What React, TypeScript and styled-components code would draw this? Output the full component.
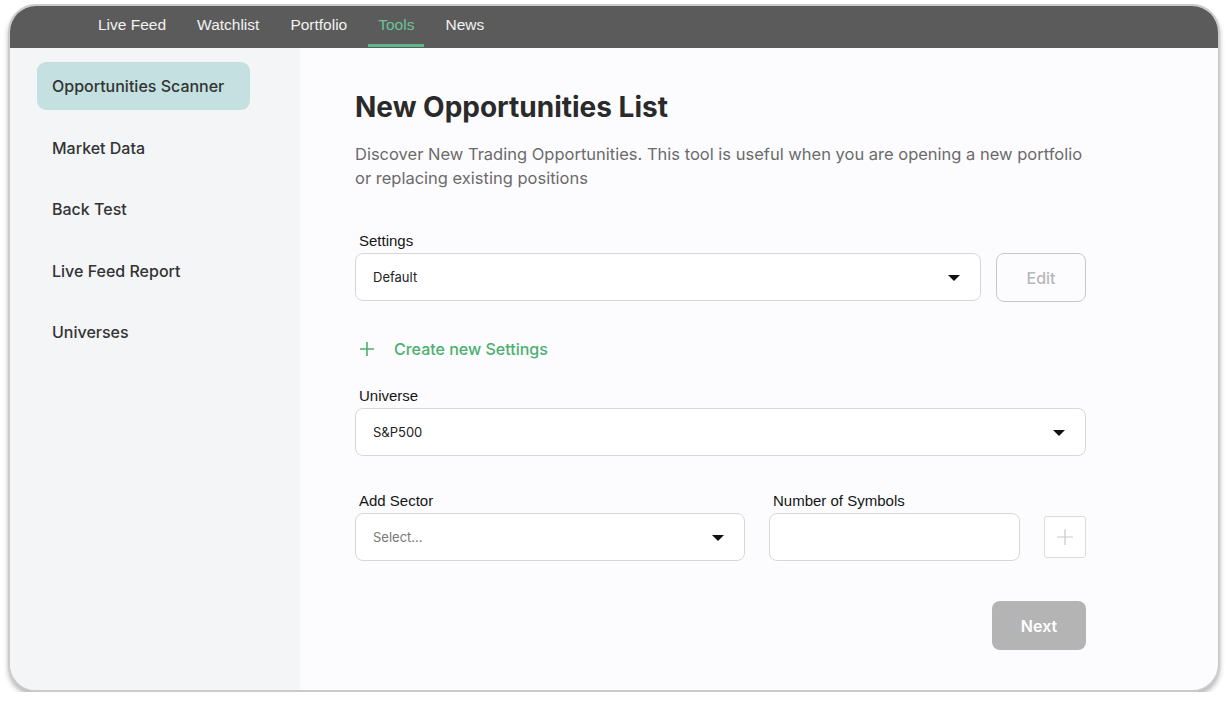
import React from 'react'
import styled, { createGlobalStyle } from 'styled-components'

const GlobalStyle = createGlobalStyle`
    * {
        box-sizing: border-box;
    }
    body {
        margin: 0;
        background: #ffffff;
        font-family: Inter, 'Noto Sans', sans-serif;
    }
`

const Window = styled.div`
    margin: 4px 0 0 8px;
    width: 1212px;
    height: 688px;
    border: 2px solid #cbcbcb;
    border-radius: 28px;
    box-shadow: 0 4px 5px rgba(0, 0, 0, 0.28);
    overflow: hidden;
    display: flex;
    flex-direction: column;
    background: #fcfcfe;
`

const TopBar = styled.nav`
    flex: 0 0 42px;
    background: #5b5b5b;
    display: flex;
    align-items: stretch;
    gap: 11px;
    padding-left: 78px;
`

const NavItem = styled.div<{ $active?: boolean }>`
    display: flex;
    align-items: center;
    padding: 0 10px;
    font-family: 'Liberation Sans', Arial, sans-serif;
    font-size: 15.5px;
    color: ${(p) => (p.$active ? '#6cc39a' : '#f2f2f2')};
    border-bottom: 3px solid ${(p) => (p.$active ? '#5bb98b' : 'transparent')};
    margin-bottom: 1px;
`

const Body = styled.div`
    flex: 1;
    display: flex;
    min-height: 0;
`

const Sidebar = styled.aside`
    width: 290px;
    flex: 0 0 290px;
    background: #f4f5f7;
    padding: 14px 0 0 27px;
    display: flex;
    flex-direction: column;
    gap: 13.5px;
`

const SideItem = styled.div<{ $active?: boolean }>`
    width: 213px;
    height: 48px;
    display: flex;
    align-items: center;
    padding-left: 15px;
    border-radius: 9px;
    background: ${(p) => (p.$active ? '#c4e0e0' : 'transparent')};
    font-size: 16px;
    font-weight: 500;
    color: #333333;
`

const Main = styled.main`
    flex: 1;
    padding: 42px 0 0 55px;
`

const Content = styled.div`
    width: 731px;
    display: flex;
    flex-direction: column;
`

const Title = styled.h1`
    margin: 0;
    font-size: 28px;
    line-height: 34px;
    font-weight: 700;
    color: #2a2a2a;
`

const Description = styled.p`
    margin: 18px 0 0;
    font-size: 16.5px;
    line-height: 24px;
    color: #6b6b6b;
`

const Field = styled.div<{ $top?: number }>`
    margin-top: ${(p) => p.$top ?? 0}px;
    display: flex;
    flex-direction: column;
    min-width: 0;
`

const Label = styled.label`
    display: block;
    padding-left: 4px;
    margin-bottom: 2px;
    font-family: 'Liberation Sans', Arial, sans-serif;
    font-size: 15px;
    line-height: 20px;
    color: #151515;
`

const Box = styled.div<{ $placeholder?: boolean }>`
    height: 48px;
    width: 100%;
    min-width: 0;
    display: flex;
    align-items: center;
    justify-content: space-between;
    padding: 0 20px 0 17px;
    background: #ffffff;
    border: 1px solid #d7d7d7;
    border-radius: 8px;
    font-size: 13px;
    color: ${(p) => (p.$placeholder ? '#777777' : '#222222')};
`

const Caret = styled.span`
    width: 0;
    height: 0;
    border-left: 6px solid transparent;
    border-right: 6px solid transparent;
    border-top: 6px solid #111111;
    margin-top: 1px;
`

const Row = styled.div`
    display: grid;
    grid-template-columns: 1fr 90px;
    column-gap: 15px;
`

const OutlineButton = styled.button`
    width: 90px;
    height: 49px;
    border: 1.5px solid #c8c8c8;
    border-radius: 8px;
    background: transparent;
    font-family: Inter, sans-serif;
    font-size: 16px;
    font-weight: 500;
    color: #b8b8b8;
`

const CreateLink = styled.div`
    margin-top: 35px;
    height: 24px;
    display: flex;
    align-items: center;
    gap: 19px;
    padding-left: 4px;
    font-size: 16px;
    font-weight: 500;
    color: #4caf6e;
`

const SectorRow = styled.div`
    margin-top: 35px;
    display: grid;
    grid-template-columns: 390px 1fr 42px;
    column-gap: 24px;
    align-items: end;
`

const PlusButton = styled.button`
    width: 42px;
    height: 42px;
    margin-bottom: 3px;
    border: 1px solid #dcdcdc;
    border-radius: 3px;
    background: #ffffff;
    display: flex;
    align-items: center;
    justify-content: center;
    padding: 0;
`

const Footer = styled.div`
    margin-top: 40px;
    display: flex;
    justify-content: flex-end;
`

const NextButton = styled.button`
    width: 94px;
    height: 49px;
    border: none;
    border-radius: 8px;
    background: #b4b4b4;
    font-family: Inter, sans-serif;
    font-size: 16px;
    font-weight: 600;
    color: #ffffff;
`

const Plus = ({ color, size, stroke }: { color: string; size: number; stroke: number }) => (
    <svg width={size} height={size} viewBox="0 0 16 16" fill="none">
        <path d="M8 1v14M1 8h14" stroke={color} strokeWidth={stroke} />
    </svg>
)

const navItems = ['Live Feed', 'Watchlist', 'Portfolio', 'Tools', 'News']
const sideItems = ['Opportunities Scanner', 'Market Data', 'Back Test', 'Live Feed Report', 'Universes']

const App = () => (
    <>
        <GlobalStyle />
        <Window>
            <TopBar>
                {navItems.map((item) => (
                    <NavItem key={item} $active={item === 'Tools'}>
                        {item}
                    </NavItem>
                ))}
            </TopBar>
            <Body>
                <Sidebar>
                    {sideItems.map((item, i) => (
                        <SideItem key={item} $active={i === 0}>
                            {item}
                        </SideItem>
                    ))}
                </Sidebar>
                <Main>
                    <Content>
                        <Title>New Opportunities List</Title>
                        <Description>
                            Discover New Trading Opportunities. This tool is useful when you are opening a new
                            portfolio or replacing existing positions
                        </Description>
                        <Field $top={41}>
                            <Label>Settings</Label>
                            <Row>
                                <Box>
                                    Default
                                    <Caret />
                                </Box>
                                <OutlineButton>Edit</OutlineButton>
                            </Row>
                        </Field>
                        <CreateLink>
                            <Plus color="#4caf6e" size={16} stroke={1.6} />
                            Create new Settings
                        </CreateLink>
                        <Field $top={25}>
                            <Label>Universe</Label>
                            <Box>
                                S&amp;P500
                                <Caret />
                            </Box>
                        </Field>
                        <SectorRow>
                            <Field>
                                <Label>Add Sector</Label>
                                <Box $placeholder>
                                    Select...
                                    <Caret />
                                </Box>
                            </Field>
                            <Field>
                                <Label>Number of Symbols</Label>
                                <Box />
                            </Field>
                            <PlusButton>
                                <Plus color="#c9c9c9" size={18} stroke={1.1} />
                            </PlusButton>
                        </SectorRow>
                        <Footer>
                            <NextButton>Next</NextButton>
                        </Footer>
                    </Content>
                </Main>
            </Body>
        </Window>
    </>
)

export default App
